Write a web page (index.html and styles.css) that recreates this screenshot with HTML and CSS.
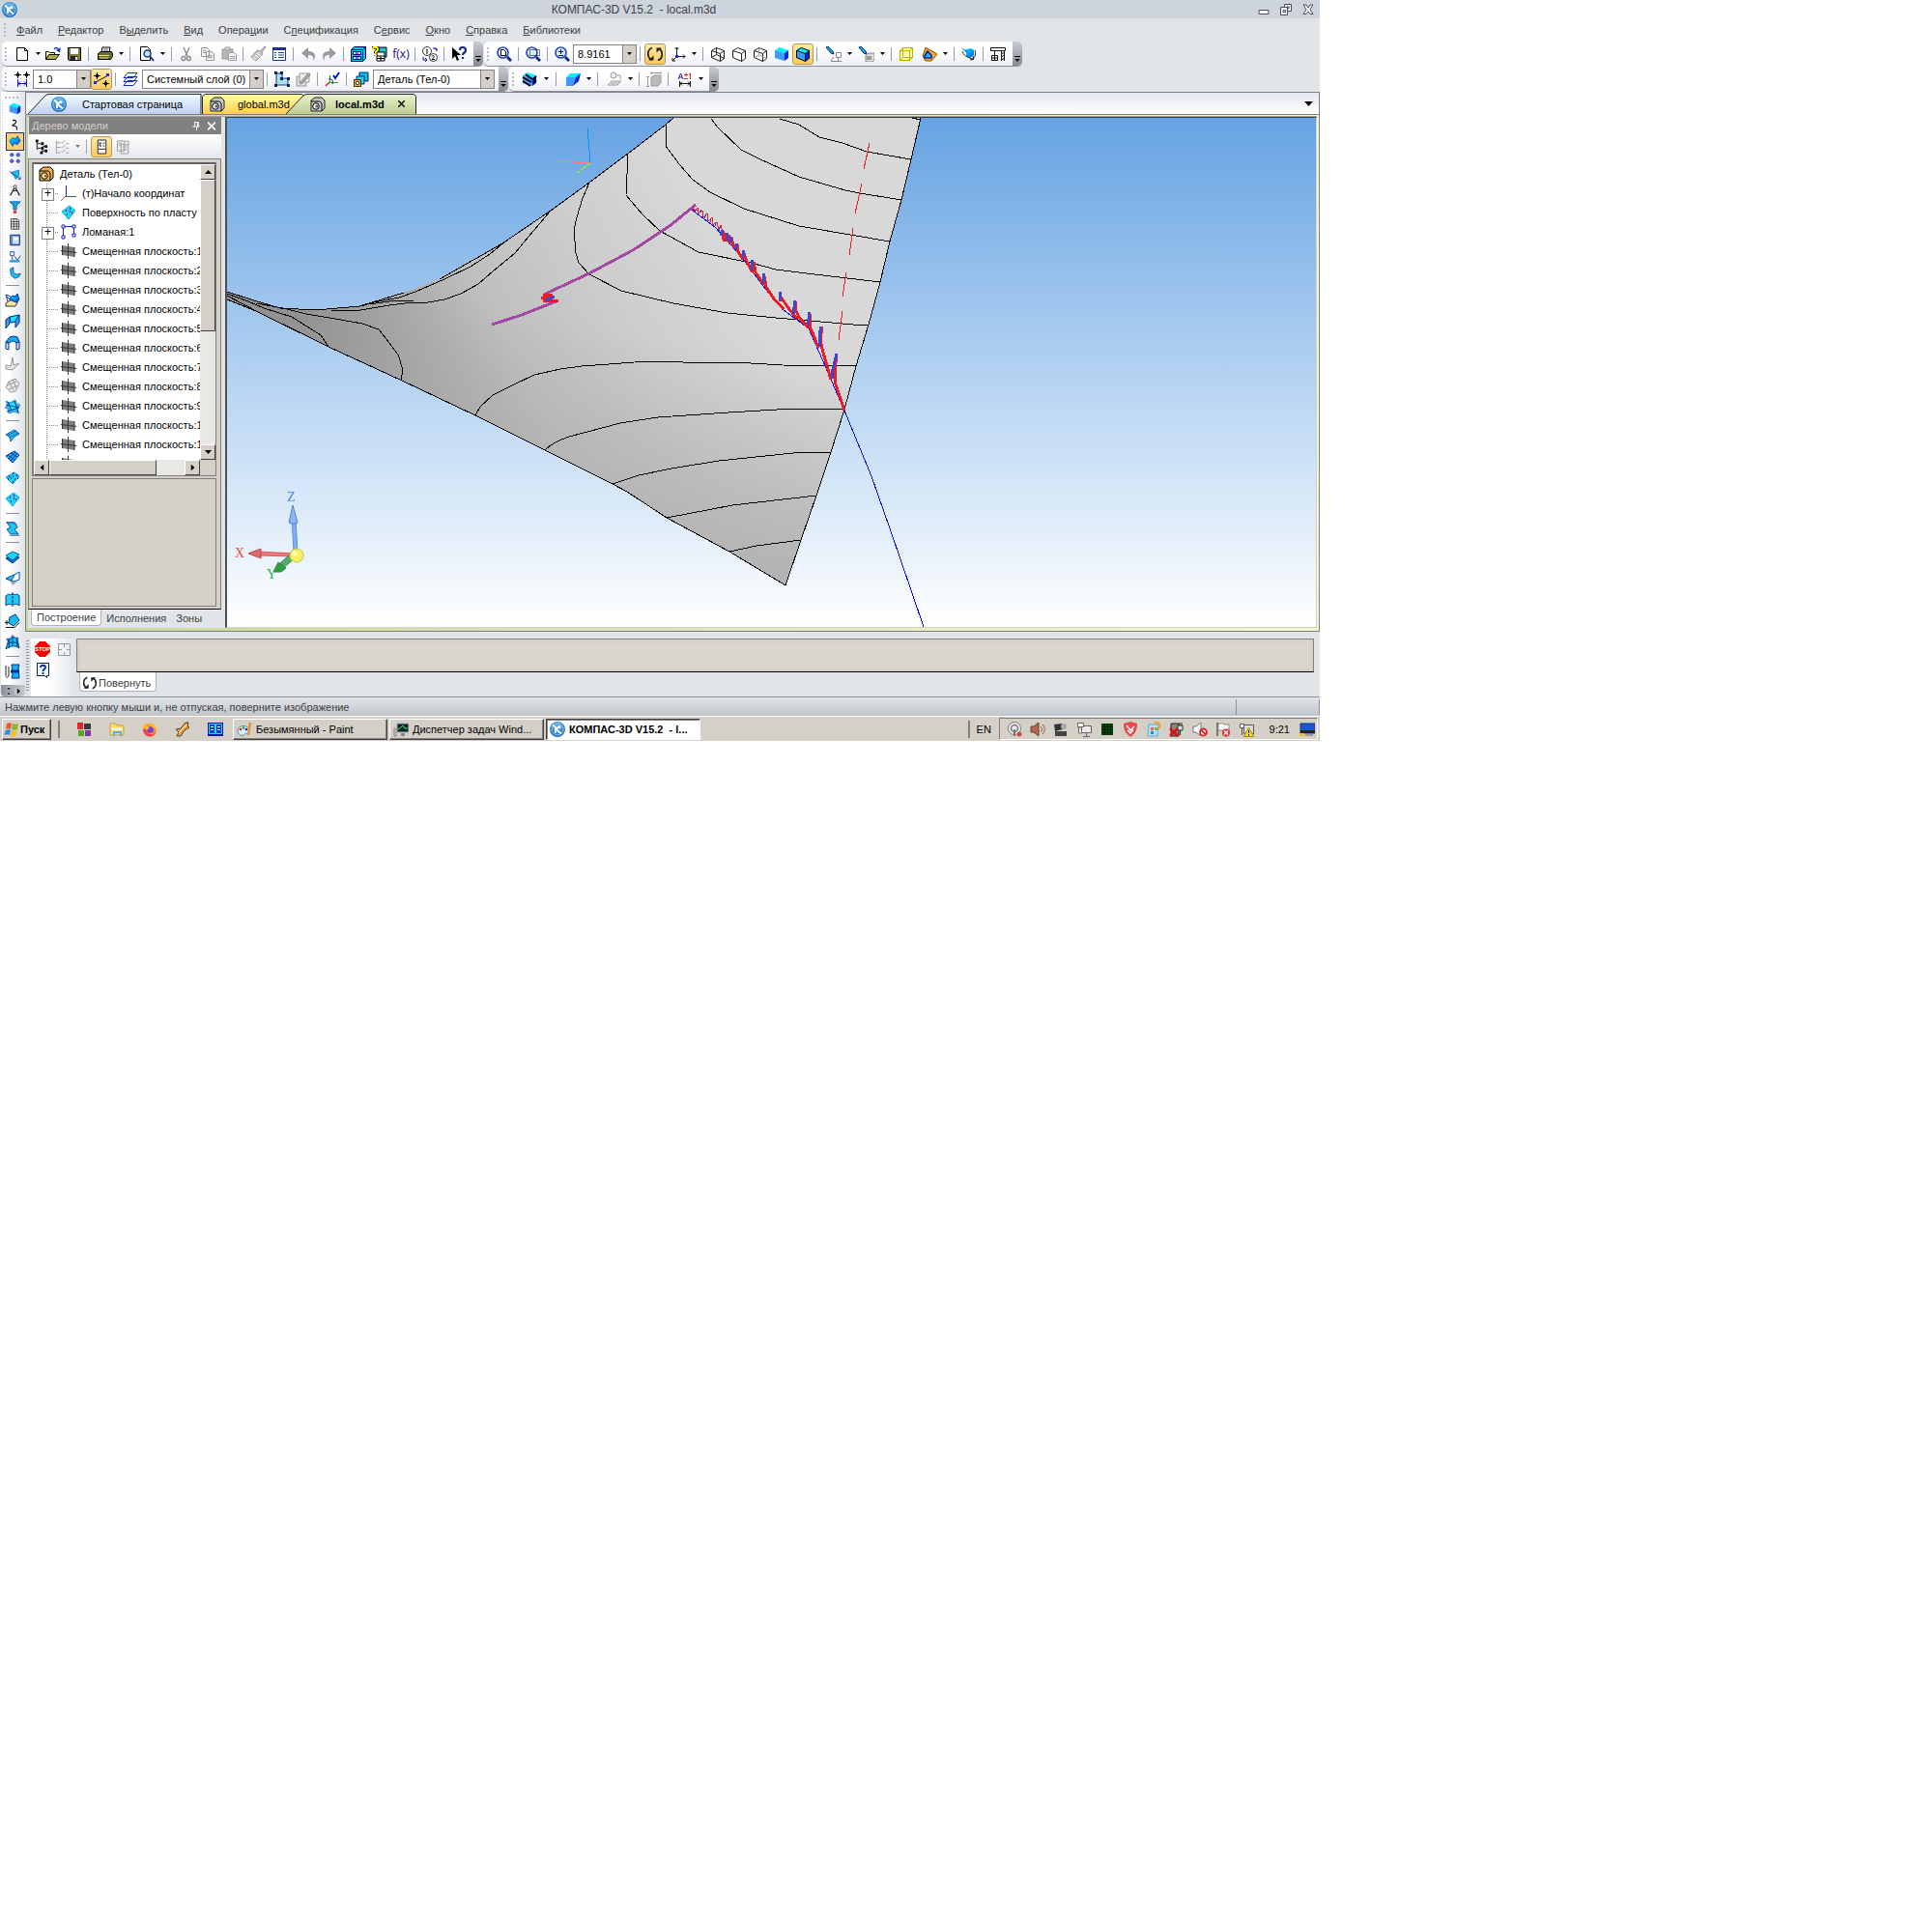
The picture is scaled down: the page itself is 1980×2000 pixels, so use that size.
FILE: index.html
```html
<!DOCTYPE html>
<html lang="ru">
<head>
<meta charset="utf-8">
<title>КОМПАС-3D V15.2 - local.m3d</title>
<meta name="viewport" content="width=device-width, initial-scale=1">
<link rel="stylesheet" href="styles.css">
</head>
<body>
<svg class="sprite" aria-hidden="true">
<defs>
<linearGradient id="g-blue" x1="0" y1="0" x2="1" y2="1"><stop offset="0" stop-color="#00e8ff"/><stop offset="1" stop-color="#0050e8"/></linearGradient>
<radialGradient id="g-logo" cx=".5" cy=".3" r=".8"><stop offset="0" stop-color="#5fb4ee"/><stop offset="1" stop-color="#0f5fb0"/></radialGradient>
<symbol id="logo" viewBox="0 0 16 16"><circle cx="8" cy="8" r="8" fill="url(#g-logo)"/><circle cx="8" cy="8" r="6" fill="none" stroke="#a8d0f0" stroke-width=".8"/><path d="M3 3.500l3 2.500v6M10.500 4.500L6.500 8l5.500 4.500M10.500 4.500v2.500" stroke="#fff" stroke-width="1.800" fill="none"/></symbol>
<symbol id="new" viewBox="0 0 16 16"><path d="M2.500 1.500h8l3 3v10h-11z" fill="#fff" stroke="#000"/><path d="M10.500 1.500v3h3" fill="none" stroke="#000"/></symbol>
<symbol id="open" viewBox="0 0 16 16"><path d="M.5 13.500v-8h3l1 1h5v3" fill="#ffffb0" stroke="#000"/><path d="M.5 13.500l3-5h11l-4 5z" fill="#b0a850" stroke="#000"/><path d="M9 3c2-3 5-1 5 2M11.500 3.500l3 2 .5-4" fill="none" stroke="#0030d0" stroke-width="1.300"/></symbol>
<symbol id="save" viewBox="0 0 16 16"><path d="M1.500 1.500h13v13h-12l-1-1z" fill="#807838" stroke="#000"/><path d="M4 2h8v6H4z" fill="#fff"/><path d="M4 10h7v4H4z" fill="#222"/><path d="M9 11h2v3H9z" fill="#ddd"/></symbol>
<symbol id="print" viewBox="0 0 16 16"><path d="M4 6l1-5h8l-1 5z" fill="#fff" stroke="#000"/><path d="M6 3h5M6 5h5" stroke="#666"/><path d="M.5 7.500l3-2h11l1 2v3l-2 3H.5z" fill="#6a6a42" stroke="#000"/><path d="M1 9.500h11M2 12h9" stroke="#e8e060"/></symbol>
<symbol id="preview" viewBox="0 0 16 16"><path d="M1.500.5h7l3 3v11h-10z" fill="#fff" stroke="#000"/><circle cx="8.500" cy="7.500" r="3.500" fill="#bfe4fa" stroke="#23388c" stroke-width="1.500"/><path d="M11 10l4 5" stroke="#23388c" stroke-width="2"/></symbol>
<symbol id="cut" viewBox="0 0 16 16"><path d="M5 1l4 9M11 1L7 10" stroke="#8c8c8c" stroke-width="1.300"/><circle cx="5" cy="12.500" r="2" fill="none" stroke="#8c8c8c" stroke-width="1.300"/><circle cx="10.500" cy="12.500" r="2" fill="none" stroke="#8c8c8c" stroke-width="1.300"/></symbol>
<symbol id="copy" viewBox="0 0 16 16"><path d="M1.500 1.500h6l2 2v7h-8zM6.500 5.500h6l2 2v7h-8z" fill="#f0f0f0" stroke="#999"/><path d="M8 9.500h5M8 11.500h5M3 4.500h3M3 6.500h3" stroke="#999"/></symbol>
<symbol id="paste" viewBox="0 0 16 16"><path d="M1 3h11v10H1z" fill="#b8b8b8" stroke="#999"/><path d="M4 1h5v3H4z" fill="#ddd" stroke="#999"/><path d="M7.500 6.500h6l2 2v6h-8z" fill="#f4f4f4" stroke="#999"/><path d="M9 10.500h5M9 12.500h5" stroke="#999"/></symbol>
<symbol id="brush" viewBox="0 0 16 16"><path d="M15 0l-5 5-3-1-6 7 5 4 7-7-1-2 4-5z" fill="#c4c4c4" stroke="#999"/><path d="M3 11l3 3M5 9l4 3M7 7l4 3" stroke="#fff"/></symbol>
<symbol id="props" viewBox="0 0 16 16"><path d="M1.500 2.500h13v12h-13z" fill="#fff" stroke="#123a9c"/><path d="M1 1h14v3H1z" fill="#1a2f9c"/><path d="M3 6.500h2M3 9h2M3 11.500h2M7 6.500h6M7 9h6M7 11.500h6" stroke="#223a8c"/></symbol>
<symbol id="undo" viewBox="0 0 16 16"><path d="M1 7l7-6v4c7 0 9 5 5 10 1-5-1-6-5-6v4z" fill="#9b9b9b"/></symbol>
<symbol id="redo" viewBox="0 0 16 16"><path d="M15 7L8 1v4c-7 0-9 5-5 10-1-5 1-6 5-6v4z" fill="#9b9b9b"/></symbol>
<symbol id="lib" viewBox="0 0 16 16"><path d="M.5 3.500l3-3h12v12l-3 3H.5z" fill="#00c8d8" stroke="#000060"/><path d="M.5 3.500h12v12M12.500 3.500l3-3" fill="none" stroke="#0000a0"/><path d="M2.500 5.500h8v3h-8zM2.500 10.500h8v3h-8z" fill="#b0f4fa" stroke="#000080"/><path d="M5 7h3M5 12h3" stroke="#0000c0"/></symbol>
<symbol id="tree" viewBox="0 0 16 16"><path d="M7 1h8v10H7z" fill="#20c8c0" stroke="#003"/><path d="M5 6h8v9H5z" fill="#fff" stroke="#000"/><path d="M5 10h8M9 10v5M5 12.500h8" stroke="#000"/><path d="M1 3c0-3 5-3 5 0 0 2-3 2-2 4M4 9v1" stroke="#000" stroke-width="3.500" fill="none"/><path d="M1 3c0-3 5-3 5 0 0 2-3 2-2 4M4 9v1" stroke="#ff0" stroke-width="2" fill="none"/></symbol>
<symbol id="fx" viewBox="0 0 16 16" overflow="visible"><text x="8" y="12" text-anchor="middle" font-family="Open Sans, sans-serif" font-size="12" fill="#10108c">f(x)</text></symbol>
<symbol id="vars" viewBox="0 0 16 16"><circle cx="5" cy="5" r="4.500" fill="#fff" stroke="#333"/><circle cx="11.500" cy="11.500" r="4" fill="#fff" stroke="#333"/><path d="M4 4l1-1v5M10 10.500c1-2 3 0 2 1l-2 2h3" fill="none" stroke="#000"/><path d="M11 2h4v3M15 4l-2-2M1 11v3h4M3 12l2 2-2 2" fill="none" stroke="#11c"/></symbol>
<symbol id="help" viewBox="0 0 16 16"><path d="M1 1v12l3-3 2 5 2-1-2-5h4z" fill="#000"/><path d="M9 4c0-4 6-4 6 0 0 3-3 2-3 5M12 11v2" fill="none" stroke="#1a2a90" stroke-width="2.200"/></symbol>
<symbol id="lens" viewBox="0 0 16 16"><circle cx="6.500" cy="6.500" r="5.500" fill="#d4effc" stroke="#2a4ab4" stroke-width="1.700"/><path d="M11 11l4 4" stroke="#14287c" stroke-width="3"/></symbol>
<symbol id="zdoc" viewBox="0 0 16 16"><use href="#lens"/><path d="M4.500 3.500h3l2 2v4h-5z" fill="#fff" stroke="#000"/></symbol>
<symbol id="zwin" viewBox="0 0 16 16"><use href="#lens"/><path d="M4.500 3.500h10v6h-10z" fill="none" stroke="#000" stroke-dasharray="1 1"/></symbol>
<symbol id="zpm" viewBox="0 0 16 16"><use href="#lens"/><path d="M6.500 3v5M4 5.500h5M4 9.500h5" stroke="#00106c"/></symbol>
<symbol id="rotate" viewBox="0 0 16 16"><path d="M5 1.500C-.5 3.500-.5 11 4 14M11 14.500C16.500 12.500 16.500 5 12 2" fill="none" stroke="#222" stroke-width="1.700"/><path d="M1 14.500h5.500V9.500zM15 1.500H9.500v5z" fill="#222"/></symbol>
<symbol id="axes" viewBox="0 0 16 16"><path d="M6.500 10V1M4.500 3l2-2 2 2M7 10.500h8M13 8.500l2 2-2 2M6 11l-4 4M2 12v3h3" fill="none" stroke="#111"/><path d="M5 9h3v3H5z" fill="#12f"/></symbol>
<symbol id="wire" viewBox="0 0 16 16"><path d="M1.500 4.500l5-3 8 3v8l-4 3-9-4zM1.500 4.500l9 3v8M10.500 7.500l4-3M6.500 1.500v7l8 4M6.500 8.500l-5 3" fill="none" stroke="#222"/></symbol>
<symbol id="wire2" viewBox="0 0 16 16"><path d="M1.500 4.500l5-3 8 3v8l-4 3-9-4zM1.500 4.500l9 3v8M10.500 7.500l4-3" fill="#fff" stroke="#222"/></symbol>
<symbol id="wire3" viewBox="0 0 16 16"><use href="#wire2"/><path d="M6.500 2v7l7 3M6.500 9l-4 2" fill="none" stroke="#999"/></symbol>
<symbol id="cube" viewBox="0 0 16 16"><path d="M1 4l5-3 9 3-4 3z" fill="#00f0ff"/><path d="M1 4l10 3v8L1 12z" fill="#3a9cf8"/><path d="M11 7l4-3v8l-4 3z" fill="#0828e0"/></symbol>
<symbol id="cubee" viewBox="0 0 16 16"><use href="#cube"/><path d="M1.500 4.500l5-3 8 3v8l-4 3-9-4zM1.500 4.500l9 3v8M10.500 7.500l4-3" fill="none" stroke="#001"/></symbol>
<symbol id="torch" viewBox="0 0 16 16"><path d="M0 1l2-1 5 5 1 3-3-1z" fill="#08b8e8" stroke="#002080"/></symbol>
<symbol id="proj" viewBox="0 0 16 16"><use href="#torch"/><path d="M10.500 6.500h5v5h-5zM12.500 12v4M5 15.500h11M5 15l3-4" fill="none" stroke="#888"/></symbol>
<symbol id="projg" viewBox="0 0 16 16"><use href="#torch"/><path d="M7 9l3-2h6v7l-2 2H7z" fill="#ddd" stroke="#888"/><path d="M8 10h5v4H8z" fill="#999"/></symbol>
<symbol id="ycube" viewBox="0 0 16 16"><path d="M1.500 4.500l3-3h10v10l-3 3h-10zM1.500 4.500h10v10M11.500 4.500l3-3M4.500 1.500v10h10M4.500 11.500l-3 3" fill="#ffff90" stroke="#b8b000"/></symbol>
<symbol id="section" viewBox="0 0 16 16"><path d="M4 1l12 7-6 7H4l-3-5z" fill="#f8a820" stroke="#805000"/><path d="M3 10l3-5 4 4v3H3z" fill="#20b0f0" stroke="#0020c0" stroke-width="1.500"/></symbol>
<symbol id="qcube" viewBox="0 0 16 16"><path d="M5 3l5-1 3 2v5l-4 3-4-2z" fill="url(#g-blue)"/><path d="M14 4c2 5-1 9-5 10M1 5c1 4 5 7 12 8M12 10l1 3-3 1" fill="none" stroke="#222"/><path d="M0 2l6 2 3 6z" fill="#2090f0"/></symbol>
<symbol id="crane" viewBox="0 0 16 16"><path d="M.5 1.500h15v3H.5zM11.500 5v10M14.500 5v10M11 14l4-2M11 11l4-2M11 8l4-2M4.500 5v4M1.500 9.500h6v5h-6zM4.500 9.500v5M1.500 12h6" fill="none" stroke="#111"/></symbol>
<symbol id="step" viewBox="0 0 16 16"><path d="M0 3.500h7M9 3.500h7M3.500 0v7M12.500 0v7" stroke="#111"/><path d="M2 2h3v3H2zM11 2h3v3h-3z" fill="#111"/><path d="M3.500 8v8M12.500 8v8M4 12.500h8M6 10.500l-2 2 2 2M10 10.500l2 2-2 2" fill="none" stroke="#11c"/></symbol>
<symbol id="snap" viewBox="0 0 16 16"><path d="M0 4.500h7M3.500 1v7M9 12.500h7M12.500 9v7" stroke="#111"/><path d="M2 3h3v3H2zM11 11h3v3h-3z" fill="#111"/><path d="M2 11L15 4" stroke="#111"/><path d="M0 10h3v3H0zM13 2h3v3h-3z" fill="#22f"/></symbol>
<symbol id="layers" viewBox="0 0 16 16"><path d="M1 14.500L5 9.500h10l-4 5zM1 10.500L5 5.500h10l-4 5zM1 6.500L5 1.500h10l-4 5z" fill="#f4f8ff" stroke="#1030c8"/></symbol>
<symbol id="sketch" viewBox="0 0 16 16"><path d="M2 2h6v5h6v7H2z" fill="#a8e0e8" stroke="#123a9c"/><path d="M0 0h3v3H0zM6 0h3v3H6zM6 6h3v3H6zM13 6h3v3h-3zM0 13h3v3H0zM13 13h3v3h-3z" fill="#124"/></symbol>
<symbol id="sketchg" viewBox="0 0 16 16"><path d="M1 5h10v10H1z" fill="#ddd" stroke="#999"/><path d="M4 2h10v9H4z" fill="#eee" stroke="#999"/><path d="M4 12l8-9 3-1-1 3-8 8z" fill="#aaa" stroke="#888"/></symbol>
<symbol id="ortho" viewBox="0 0 16 16"><path d="M5.500 4v7M5 11.500h9" stroke="#2a2"/><path d="M5 11l-4 4" stroke="#d22" stroke-width="1.500"/><path d="M9 4l2 3 4-6" fill="none" stroke="#0020b0" stroke-width="2"/><path d="M4 8c4-1 5 2 4 5" fill="none" stroke="#11c"/></symbol>
<symbol id="parts" viewBox="0 0 16 16"><path d="M6 1h9v9H6z" fill="#18b8e0" stroke="#00287c"/><path d="M3 5h8v8H3z" fill="#38d0f0" stroke="#00287c"/><path d="M.5 8.500h7v7h-7z" fill="#f8b848" stroke="#402800"/><circle cx="4" cy="12" r="1.800" fill="#fff" stroke="#402800"/></symbol>
<symbol id="zebra" viewBox="0 0 16 16"><use href="#cube"/><path d="M1 6l9 5M1 10l8 5M4 3l7 5M12 8l3-3M12 12l3-3" stroke="#001" stroke-width="2"/></symbol>
<symbol id="wedge" viewBox="0 0 16 16"><path d="M1 6l4-4h11L11 6z" fill="#00f0ff"/><path d="M1 6h10L8 15H1z" fill="#3a9cf8"/><path d="M11 6l5-4-2 8-6 5z" fill="#0828e0"/></symbol>
<symbol id="sheetg" viewBox="0 0 16 16"><circle cx="7" cy="4" r="3" fill="#eee" stroke="#999"/><path d="M10 4h4v4M1 14l4-4h10l-4 4zM4 12h9" fill="none" stroke="#999"/></symbol>
<symbol id="dimbox" viewBox="0 0 16 16"><path d="M5 6l3-2h7v8l-3 3H5z" fill="#bbb" stroke="#999"/><path d="M5 1.500h10M5 0v3M15 0v3M1.500 5v10M0 5.500h3M0 15.500h3" stroke="#999"/></symbol>
<symbol id="tol" viewBox="0 0 16 16"><path d="M1 8l2.500-6L6 8M2 6h3" fill="none" stroke="#11239c"/><path d="M7 3.500h4M9 1.500v4M7 7.500h4M12 3l1.500-1v6" fill="none" stroke="#d22"/><path d="M2.500 10v6M13.500 10v6M3 12.500h10M5 10.500l-2 2 2 2M11 10.500l2 2-2 2" fill="none" stroke="#111"/></symbol>
<symbol id="part" viewBox="0 0 16 16"><path d="M1 4l4-3h7l3 3v8l-3 3H1z" fill="#f0b050" stroke="#000"/><path d="M1 5h9l2 2v8" fill="none" stroke="#000"/><circle cx="6" cy="10" r="3.300" fill="#ffe0a0" stroke="#000"/><circle cx="7" cy="10" r="1.300" fill="#806020"/></symbol>
<symbol id="partg" viewBox="0 0 16 16"><path d="M1 4l4-3h7l3 3v8l-3 3H1z" fill="#c8c8c0" stroke="#222"/><path d="M1 5h9l2 2v8" fill="none" stroke="#000"/><circle cx="6" cy="10" r="3.300" fill="#eee" stroke="#000"/><circle cx="7" cy="10" r="1.500" fill="#555"/></symbol>
<symbol id="curve" viewBox="0 0 16 16"><path d="M5 2c4-1 6 1 3 4s-5 2-1 3 4 3 3 5" fill="none" stroke="#111" stroke-width="1.400"/></symbol>
<symbol id="surf" viewBox="0 0 16 16"><path d="M1 7l4-4 4 2 2-4 4 6-4 5-4-2-2 4z" fill="url(#g-blue)" stroke="#0050b0"/></symbol>
<symbol id="dots" viewBox="0 0 16 16"><g fill="#5a74f0" stroke="#1830b0"><circle cx="4" cy="4" r="2"/><circle cx="12" cy="4" r="2"/><circle cx="4" cy="12" r="2"/><circle cx="12" cy="12" r="2"/></g></symbol>
<symbol id="surfa" viewBox="0 0 16 16"><path d="M3 6l5-2 5-1v7l-4 4-2-4z" fill="#20c8e8" stroke="#06c"/><path d="M1 4l14 10M12 14h3v-3" stroke="#1030c0" fill="none"/></symbol>
<symbol id="compass" viewBox="0 0 16 16"><path d="M8 3L2 14M8 3l6 11M5 8h6" fill="none" stroke="#222" stroke-width="1.500"/><circle cx="8" cy="3" r="2" fill="#eee" stroke="#222"/></symbol>
<symbol id="funnel" viewBox="0 0 16 16"><path d="M1 1h14l-5 5v5H6V6z" fill="#18a0e8" stroke="#035a9c"/><path d="M6 12h4v4H6z" fill="#e04020"/></symbol>
<symbol id="table" viewBox="0 0 16 16"><path d="M3 2h8l2 2v11H3z" fill="#fff" stroke="#222"/><path d="M3 5.500h10M3 8.500h10M3 11.500h10M6.500 2v13M10 2v13" stroke="#333"/></symbol>
<symbol id="book" viewBox="0 0 16 16"><path d="M2 1.500h12v13H2z" fill="#3868d0" stroke="#102060"/><path d="M5 3h8v10H5z" fill="#c8e4fa"/><path d="M6 5h6v3H6z" fill="#fff"/><path d="M3.500 2v12" stroke="#fff" stroke-dasharray="1 1"/></symbol>
<symbol id="check" viewBox="0 0 16 16"><path d="M2 2h5v5H2zM4.500 7v6" fill="#eef" stroke="#123a9c"/><path d="M8 8l3 5 4-6" fill="none" stroke="#222"/><path d="M1 14h13" stroke="#28a0e8" stroke-width="3"/></symbol>
<symbol id="elbow" viewBox="0 0 16 16"><path d="M2 3l4-2v7l4 2 5-1-2 4-5 2-5-4z" fill="#18c8e8" stroke="#0040a0"/></symbol>
<symbol id="p1" viewBox="0 0 16 16"><path d="M1 11l4-3h9l-3 6H1z" fill="#f0e8a0" stroke="#333"/><path d="M5 6l3-3 3 1 2-3 2 6-3 3-3-1z" fill="url(#g-blue)" stroke="#03a"/><path d="M1 3l5 5M3 9L1 2l5 2" stroke="#03a" fill="none"/></symbol>
<symbol id="p2" viewBox="0 0 16 16"><path d="M5 3l10-2-3 7-6 1z" fill="#18e0f8" stroke="#002c90"/><path d="M5 3v7l-4 5V6zM15 1v8l-4 5V7z" fill="#3a9cf0" stroke="#002c90"/></symbol>
<symbol id="p3" viewBox="0 0 16 16"><path d="M1 7l4-5q4-2 8 0l2 5-3 1q-4-4-7 0z" fill="#18a8f0" stroke="#002c90"/><path d="M1 7v7l3 1V9zM12 8v7l3-1V7z" fill="#c8ecfc" stroke="#002c90"/></symbol>
<symbol id="p4" viewBox="0 0 16 16"><path d="M1 9l5 1 2-9 1 8 6-2-7 7-7-1z" fill="#e4e4e4" stroke="#999"/></symbol>
<symbol id="p5" viewBox="0 0 16 16"><path d="M1 10l3-6 7-3 4 5-4 8-5 1z" fill="#e8e8e8" stroke="#999"/><path d="M4 4l5 9M8 2l4 9M2 8l10-4M4 12l9-4" stroke="#999" fill="none"/></symbol>
<symbol id="p6" viewBox="0 0 16 16"><path d="M1 2l4 2 6-3 1 4 4 1-3 5 2 4-5-2-6 2-1-5-3-1 3-3z" fill="#2cb0f4" stroke="#2898e0"/><path d="M5 5l6-1 2 5-6 3z" fill="#18f0ff"/><path d="M3 3l4 9M10 2l4 12M1 6l14 3M2 13l12-4" stroke="#003c90" fill="none"/></symbol>
<symbol id="p7" viewBox="0 0 16 16"><path d="M1 7l9-5 5 4-5 3-4 5c0-4-2-6-5-7z" fill="#20c8f0" stroke="#0858b0"/><path d="M3 8l9-5M5 10l9-5" stroke="#0858b0"/></symbol>
<symbol id="p8" viewBox="0 0 16 16"><path d="M1 7l9-5 5 4-7 8z" fill="#20b8f0" stroke="#0030a0"/><path d="M3 6l7 5M6 4l7 4M4 10l7-7M6 12l7-8" stroke="#0030a0"/></symbol>
<symbol id="p9" viewBox="0 0 16 16"><path d="M1 7l9-5 5 4-7 8z" fill="#18d0f0" stroke="#18a0e0"/><path d="M4 6h1M8 3h1M12 5h1M6 8h1M10 9h1M3 9h1M8 12h1M13 8h1M8 6h1" stroke="#1020a0" stroke-width="2"/></symbol>
<symbol id="p10" viewBox="0 0 16 16"><path d="M1 7l8-6 6 5-7 9z" fill="#18d8f0" stroke="#18a0e0"/><path d="M5 6h1M9 4h1M11 8h1M6 10h1M9 7h1" stroke="#1020a0" stroke-width="2"/></symbol>
<symbol id="p11" viewBox="0 0 16 16"><path d="M1 1.500h9l3 3M5 15.500h10l-3-4" fill="none" stroke="#888"/><path d="M2 2h8l3 5-3 2 4 5H6L2 9l4-2z" fill="#18c8f0" stroke="#1050b0"/></symbol>
<symbol id="p12" viewBox="0 0 16 16"><path d="M1 9l7-4 7 3-7 6z" fill="#0870d0" stroke="#003080"/><path d="M1 6l7-4 7 3-7 6z" fill="#18d8f8" stroke="#0858b0"/></symbol>
<symbol id="p13" viewBox="0 0 16 16"><path d="M5 10l8 1-5 4z" fill="#aaa"/><path d="M1 8l9-4 5-3v8l-6 2z" fill="#fff" stroke="#0858b0"/><path d="M1 8l9-4-3 6z" fill="#18d0f0" stroke="#0858b0"/></symbol>
<symbol id="p14" viewBox="0 0 16 16"><path d="M1 14V4c4-4 4 0 7-2 3 2 4-2 7 2v10c-3-3-5 0-7-2-2 2-4-1-7 2z" fill="#28c8f0" stroke="#0040a0"/><path d="M8 0v15" stroke="#002060" stroke-dasharray="3 1"/></symbol>
<symbol id="p15" viewBox="0 0 16 16"><path d="M5 4l6-3 4 6-6 6-5-3z" fill="#18b8f0" stroke="#0040a0"/><path d="M0 9.500h4M2 7v5M1 14.500h9l5-5" stroke="#111" fill="none"/></symbol>
<symbol id="p16" viewBox="0 0 16 16"><path d="M1 15l3-10c3-3 7-3 9 0l2 9c-4-3-9-3-14 1z" fill="#18c8e8" stroke="#003c90"/><path d="M3 10c4-3 7-3 11 0M8 3v9M5 4l-1 10M12 5l1 8" stroke="#003c90" fill="none"/><g fill="#fff" stroke="#1030c0"><circle cx="3" cy="5" r="1"/><circle cx="8" cy="2" r="1"/><circle cx="13" cy="4" r="1"/></g></symbol>
<symbol id="p17" viewBox="0 0 16 16"><path d="M7 1h8l-1 3 1 11H7l1-4z" fill="#18b0f0" stroke="#002c90"/><path d="M6 8h9" stroke="#002c90" stroke-width="3"/><path d="M1 2v9c0 5 3 4 3 1V3" fill="none" stroke="#222"/></symbol>
<symbol id="ttree" viewBox="0 0 16 16"><path d="M3.500 1v10M4 4.500h4M4 9.500h4M9.500 9v5M10 7.500h2M10 12.500h2" stroke="#111" fill="none"/><path d="M2 0h3v3H2zM8 3h3v3H8zM8 8h3v3H8zM7 13h3v3H7zM12 6h3v3h-3zM12 11h3v3h-3z" fill="#111"/></symbol>
<symbol id="tlist" viewBox="0 0 16 16"><path d="M1.500 1v14M2 3.500h4M2 8.500h4M2 14.500h4M7 3l1 1 3-3M7 8l1 1 3-3M7 13l1 1 3-3M12 4.500h3M12 9.500h3M12 14.500h3" fill="none" stroke="#999"/></symbol>
<symbol id="tdoc" viewBox="0 0 16 16"><path d="M3.500.5h9v15h-9zM4 10.500h8M5.500 3v4h2M5.500 4h2M9 4h2M9 7h2" fill="#fffbe8" stroke="#15205c"/></symbol>
<symbol id="tdocs" viewBox="0 0 16 16"><path d="M1.500 1.500h8v11h-8zM5.500 5.500h8v10h-8z" fill="#eee" stroke="#999"/><path d="M3 4h4M3 6h2M7 8h5M7 11h5M10 2h4v4" stroke="#999" fill="none"/></symbol>
<symbol id="origin" viewBox="0 0 16 16"><path d="M5.500 0v11" stroke="#22c"/><path d="M5 11.500h11" stroke="#2a6a4a"/><path d="M5 11l-5 5" stroke="#d44"/></symbol>
<symbol id="poly" viewBox="0 0 16 16"><path d="M2.500 13V2.500h11V11" fill="none" stroke="#1a1ad0"/><path d="M1 1h3v3H1zM12 1h3v3h-3zM1 12h3v3H1zM12 10h3v3h-3z" fill="#fff" stroke="#1a1ad0"/></symbol>
<symbol id="plane" viewBox="0 0 16 16"><path d="M1 2l6 1 7 1v10l-6-1-7-1z" fill="#808080"/><path d="M7.500 0v16M0 7.500l16 2M1.500 2v10M14 4v10" stroke="#333" fill="none"/></symbol>
<symbol id="stop" viewBox="0 0 16 16"><path d="M5 0h6l5 5v6l-5 5H5l-5-5V5z" fill="#f00"/><text x="8" y="10" text-anchor="middle" font-family="Liberation Sans" font-weight="bold" font-size="6" fill="#fff">STOP</text></symbol>
<symbol id="target" viewBox="0 0 16 16"><path d="M2.500 2.500h12v12h-12zM8.500 2v4M8.500 11v4M2 8.500h4M11 8.500h4" fill="none" stroke="#999"/></symbol>
<symbol id="note" viewBox="0 0 16 16"><path d="M2.500.5h12v13h-2v2l-2-2h-8z" fill="#e0f6fc" stroke="#123"/><path d="M6 5c0-3 5-3 5 0 0 2-2.500 1.500-2.500 4M8.500 10v2" fill="none" stroke="#15288c" stroke-width="1.800"/></symbol>
<symbol id="flag" viewBox="0 0 16 16"><path d="M3 2c2-1 4-1 5 0L7 8c-2-1-4-1-5 0z" fill="#f0582a"/><path d="M9 2c2 1 4 1 6 0l-1 6c-2 1-4 1-6 0z" fill="#80bc30"/><path d="M2 9c2-1 4-1 5 0l-1 5c-2-1-4-1-6 0z" fill="#2a90e0"/><path d="M8 9c2 1 4 1 6 0l-2 6c-2 1-4 1-5 0z" fill="#f8c020"/></symbol>
<symbol id="cubes" viewBox="0 0 16 16"><path d="M1 1h6v7H1z" fill="#e02828"/><path d="M8 2h7v6H8z" fill="#383838"/><path d="M2 9h6v6H2z" fill="#58a828"/><path d="M9 9h6v6H9z" fill="#8038a8"/></symbol>
<symbol id="folder" viewBox="0 0 16 16"><path d="M1 2h6l1 2h7v10H1z" fill="#f8d878" stroke="#c8a040"/><path d="M2 6h12v3H2z" fill="#fff2b8"/><path d="M4 15v-5h9v5h-2v-3H6v3z" fill="#58b0e8"/></symbol>
<symbol id="fox" viewBox="0 0 16 16"><circle cx="8" cy="9" r="7" fill="#ff9420"/><path d="M1 8c2 10 12 9 14 1-1 3-4 5-7 4s-4-3-3-6z" fill="#f83858"/><circle cx="8.500" cy="8.500" r="3.500" fill="#7840d8"/><path d="M8 1c4 1 7 4 7 8-2-3-5-3-7-5zM1 5l2-3 2 3 3 1-3 3z" fill="#ffbc28"/></symbol>
<symbol id="bolt" viewBox="0 0 16 16"><path d="M1 8l5-1 5-6h3l-1 3 2 2-5 3-4 6H2l2-4z" fill="#f0a028" stroke="#444"/><path d="M4 12l8-9" stroke="#fff"/></symbol>
<symbol id="commander" viewBox="0 0 16 16"><path d="M0 1h16v14H0z" fill="#0818a0"/><path d="M1.500 2.500h6v10h-6zM8.500 2.500h6v10h-6z" fill="#1038d8" stroke="#18e0f0"/><path d="M3 5.500h3M3 8.500h3M10 5.500h3M10 8.500h3" stroke="#fff"/></symbol>
<symbol id="paint" viewBox="0 0 16 16"><path d="M1 9c0-6 12-6 12 0 0 7-3 1-5 4-2 3-7 1-7-4z" fill="#d8eef8" stroke="#5090b0"/><circle cx="4" cy="8" r="1.300" fill="#d22"/><circle cx="7" cy="6.500" r="1.300" fill="#3a3"/><circle cx="10" cy="8" r="1.300" fill="#22c"/><path d="M14 1l-2 13" stroke="#e89030" stroke-width="2.500"/></symbol>
<symbol id="monitor" viewBox="0 0 16 16"><path d="M1 7h2v8H1z" fill="#ccc" stroke="#888"/><path d="M4 2h12v9H4z" fill="#123" stroke="#aaa"/><path d="M5 8l3-2 2-2 2 3h3" fill="none" stroke="#2f4"/><path d="M8 12h4v3H8z" fill="#888"/></symbol>
<symbol id="t1" viewBox="0 0 16 16"><circle cx="8" cy="7" r="6.500" fill="#eee" stroke="#777"/><circle cx="8" cy="7" r="3.500" fill="none" stroke="#777" stroke-width="1.500"/><path d="M7 8h2v7H7z" fill="#777"/><circle cx="13" cy="13" r="2.500" fill="#d44"/></symbol>
<symbol id="t2" viewBox="0 0 16 16"><path d="M1 5h3l5-4v14l-5-4H1z" fill="#b86848" stroke="#643"/><path d="M11 5c2 2 2 4 0 6M13 3c3 3 3 7 0 10" fill="none" stroke="#955"/></symbol>
<symbol id="t3" viewBox="0 0 16 16"><path d="M1 3l8-1 1 6-8 2z" fill="#333"/><path d="M2 10h12v5H2z" fill="#444"/><circle cx="11" cy="5" r="3" fill="#aaa"/></symbol>
<symbol id="t4" viewBox="0 0 16 16"><path d="M5.500 4.500h10v7h-10zM10.500 12v3M7 15.500h7" fill="#e8e8e8" stroke="#666"/><path d="M1.500 1.500h6v4h-6zM2.500 6v6h3" fill="#fff" stroke="#666"/></symbol>
<symbol id="t5" viewBox="0 0 16 16"><path d="M2 2h12v12H2z" fill="#064a06"/><path d="M5.500 2v12M8.500 2v12M11.500 2v12M2 5.500h12M2 8.500h12M2 11.500h12" stroke="#020"/></symbol>
<symbol id="t6" viewBox="0 0 16 16"><path d="M1 2l7-2 7 2c0 7-2 10-7 14C3 12 1 9 1 2z" fill="#e84848"/><path d="M4 4l4 5 4-4M5 9l3 3 3-4" stroke="#fff" stroke-width="1.500" fill="none"/></symbol>
<symbol id="t7" viewBox="0 0 16 16"><path d="M3 3h10l-1 12H2z" fill="#b8e0f8" stroke="#68a8d8"/><path d="M5 6h3v3H5z" fill="#e64"/><path d="M9 6h3v3H9z" fill="#7b3"/><path d="M5 10h3v3H5z" fill="#28d"/><path d="M9 1c7-1 7 6 3 6" fill="none" stroke="#f0a030" stroke-width="2"/></symbol>
<symbol id="t8" viewBox="0 0 16 16"><path d="M2 2h8v13H2z" fill="#888" stroke="#222"/><path d="M9 4h5v5H9zM11 1v3M13 1v3M11.500 9v5" stroke="#333" fill="#ddd"/><path d="M1 7l8 8M9 7l-8 8" stroke="#e01010" stroke-width="2.500"/></symbol>
<symbol id="t9" viewBox="0 0 16 16"><path d="M1 5h3l5-4v14l-5-4H1z" fill="#fff" stroke="#777"/><circle cx="11.500" cy="11" r="3.500" fill="#fff" stroke="#e02020" stroke-width="1.800"/><path d="M9 9l5 4" stroke="#e02020" stroke-width="1.800"/></symbol>
<symbol id="t10" viewBox="0 0 16 16"><path d="M2 1v14" stroke="#777" stroke-width="2"/><path d="M3 2h5l1 1h5v7H9L8 9H3z" fill="#fff" stroke="#888"/><circle cx="11" cy="11.500" r="4" fill="#e03030"/><path d="M9 9.500l4 4M13 9.500l-4 4" stroke="#fff" stroke-width="1.500"/></symbol>
<symbol id="t11" viewBox="0 0 16 16"><path d="M5.500 3.500h10v9h-10z" fill="#ddd" stroke="#555"/><path d="M1.500 2.500h4v4h-4zM3.500 7v7" stroke="#555" fill="#fff"/><path d="M10.500 6l5 9.500h-10z" fill="#f8d820" stroke="#a80"/><path d="M10.500 9v3M10.500 13v1.500" stroke="#000"/></symbol>
<symbol id="t12" viewBox="0 0 16 16"><path d="M1 2h15v10H1z" fill="#1858c8" stroke="#103880"/><path d="M1 9h15v3H1z" fill="#222"/><path d="M0 12h5v3H0z" fill="#f0c030"/><path d="M6 13h8v2H6z" fill="#999"/></symbol>
<symbol id="down" viewBox="0 0 7 4"><path d="M0 0h7L3.500 4z" fill="#000"/></symbol>
</defs>
</svg>

<div class="screen">
  <header class="titlebar">
    <svg class="ico"><use href="#logo"/></svg>
    <h1 class="title">КОМПАС-3D V15.2 &nbsp;- local.m3d</h1>
    <div class="winbtns">
      <button class="winbtn" aria-label="Свернуть"><svg viewBox="0 0 12 12"><path d="M1 6.500h10v4H1z" fill="#f4f6f8" stroke="#4c4c60"/></svg></button>
      <button class="winbtn" aria-label="Восстановить"><svg viewBox="0 0 12 12"><path d="M4.500.5h7v7h-7zM7 3h2v2H7z" fill="#f4f6f8" stroke="#4c4c60"/><path d="M.5 3.500h7v8h-7zM3 6.500h2.500v2H3z" fill="#f4f6f8" stroke="#4c4c60"/></svg></button>
      <button class="winbtn" aria-label="Закрыть"><svg viewBox="0 0 12 12"><path d="M1 1h3l2 3 2-3h3L8 6l3 4.500H8L6 8l-2 2.500H1L4 6z" fill="#f4f6f8" stroke="#4c4c60"/></svg></button>
    </div>
  </header>

  <nav class="menubar" aria-label="Главное меню">
    <span class="grip"></span>
    <button><u>Ф</u>айл</button><button><u>Р</u>едактор</button><button>В<u>ы</u>делить</button><button><u>В</u>ид</button><button>Опера<u>ц</u>ии</button><button>С<u>п</u>ецификация</button><button>С<u>е</u>рвис</button><button><u>О</u>кно</button><button><u>С</u>правка</button><button><u>Б</u>иблиотеки</button>
  </nav>

  <div class="toolrow">
    <div class="toolbar">
      <span class="grip"></span>
      <button class="tool" aria-label="Создать"><svg><use href="#new"/></svg></button><button class="drop" aria-label="Ещё"><svg><use href="#down"/></svg></button>
      <button class="tool" aria-label="Открыть"><svg><use href="#open"/></svg></button>
      <button class="tool" aria-label="Сохранить"><svg><use href="#save"/></svg></button><span class="sep"></span>
      <button class="tool split" aria-label="Печать"><svg><use href="#print"/></svg></button><button class="drop" aria-label="Ещё"><svg><use href="#down"/></svg></button><span class="sep"></span>
      <button class="tool split" aria-label="Просмотр"><svg><use href="#preview"/></svg></button><button class="drop" aria-label="Ещё"><svg><use href="#down"/></svg></button><span class="sep"></span>
      <button class="tool" aria-label="Вырезать"><svg><use href="#cut"/></svg></button>
      <button class="tool" aria-label="Копировать"><svg><use href="#copy"/></svg></button>
      <button class="tool" aria-label="Вставить"><svg><use href="#paste"/></svg></button><span class="sep"></span>
      <button class="tool" aria-label="Копировать свойства"><svg><use href="#brush"/></svg></button>
      <button class="tool" aria-label="Свойства"><svg><use href="#props"/></svg></button><span class="sep"></span>
      <button class="tool" aria-label="Отменить"><svg><use href="#undo"/></svg></button>
      <button class="tool" aria-label="Повторить"><svg><use href="#redo"/></svg></button><span class="sep"></span>
      <button class="tool" aria-label="Менеджер библиотек"><svg><use href="#lib"/></svg></button>
      <button class="tool" aria-label="Менеджер документа"><svg><use href="#tree"/></svg></button>
      <button class="tool" aria-label="Переменные"><svg><use href="#fx"/></svg></button><span class="sep"></span>
      <button class="tool" aria-label="Перестроить"><svg><use href="#vars"/></svg></button><span class="sep"></span>
      <button class="tool" aria-label="Справка"><svg><use href="#help"/></svg></button>
      <button class="cap" aria-label="Параметры панели"><svg><use href="#down"/></svg></button>
    </div>
    <div class="toolbar">
      <span class="grip"></span>
      <button class="tool" aria-label="Показать всё"><svg><use href="#zdoc"/></svg></button><span class="sep"></span>
      <button class="tool" aria-label="Увеличить рамкой"><svg><use href="#zwin"/></svg></button><span class="sep"></span>
      <button class="tool" aria-label="Масштаб"><svg><use href="#zpm"/></svg></button>
      <span class="combo combo-zoom"><select aria-label="Текущий масштаб"><option>8.9161</option></select><i><svg><use href="#down"/></svg></i></span><span class="sep"></span>
      <button class="tool active" aria-label="Повернуть"><svg><use href="#rotate"/></svg></button>
      <button class="tool split" aria-label="Ориентация"><svg><use href="#axes"/></svg></button><button class="drop" aria-label="Ещё"><svg><use href="#down"/></svg></button><span class="sep"></span>
      <button class="tool" aria-label="Каркас"><svg><use href="#wire"/></svg></button>
      <button class="tool" aria-label="Без невидимых линий"><svg><use href="#wire2"/></svg></button>
      <button class="tool" aria-label="Тонкие невидимые"><svg><use href="#wire3"/></svg></button>
      <button class="tool" aria-label="Полутоновое"><svg><use href="#cube"/></svg></button>
      <button class="tool active" aria-label="Полутоновое с каркасом"><svg><use href="#cubee"/></svg></button><span class="sep"></span>
      <button class="tool split" aria-label="Скрыть"><svg><use href="#proj"/></svg></button><button class="drop" aria-label="Ещё"><svg><use href="#down"/></svg></button>
      <button class="tool split" aria-label="Показать"><svg><use href="#projg"/></svg></button><button class="drop" aria-label="Ещё"><svg><use href="#down"/></svg></button><span class="sep"></span>
      <button class="tool" aria-label="Габарит"><svg><use href="#ycube"/></svg></button>
      <button class="tool split" aria-label="Сечение"><svg><use href="#section"/></svg></button><button class="drop" aria-label="Ещё"><svg><use href="#down"/></svg></button><span class="sep"></span>
      <button class="tool" aria-label="Перспектива"><svg><use href="#qcube"/></svg></button><span class="sep"></span>
      <button class="tool" aria-label="Упрощения"><svg><use href="#crane"/></svg></button>
      <button class="cap" aria-label="Параметры панели"><svg><use href="#down"/></svg></button>
    </div>
  </div>

  <div class="toolrow">
    <div class="toolbar">
      <span class="grip"></span>
      <button class="tool" aria-label="Шаг"><svg><use href="#step"/></svg></button>
      <span class="combo combo-step"><select aria-label="Шаг курсора"><option>1.0</option></select><i><svg><use href="#down"/></svg></i></span>
      <button class="tool active" aria-label="Привязки"><svg><use href="#snap"/></svg></button><span class="sep"></span>
      <button class="tool" aria-label="Слои"><svg><use href="#layers"/></svg></button>
      <span class="combo combo-layer"><select aria-label="Текущий слой"><option>Системный слой (0)</option></select><i><svg><use href="#down"/></svg></i></span><span class="sep"></span>
      <button class="tool" aria-label="Эскиз"><svg><use href="#sketch"/></svg></button>
      <button class="tool" aria-label="Редактировать эскиз"><svg><use href="#sketchg"/></svg></button><span class="sep"></span>
      <button class="tool" aria-label="Система координат"><svg><use href="#ortho"/></svg></button><span class="sep"></span>
      <button class="tool" aria-label="Исполнения"><svg><use href="#parts"/></svg></button>
      <span class="combo combo-layer"><select aria-label="Текущая деталь"><option>Деталь (Тел-0)</option></select><i><svg><use href="#down"/></svg></i></span>
      <button class="cap" aria-label="Параметры панели"><svg><use href="#down"/></svg></button>
    </div>
    <div class="toolbar">
      <span class="grip"></span>
      <button class="tool" aria-label="Зебра"><svg><use href="#zebra"/></svg></button><button class="drop drop-wide" aria-label="Ещё"><svg><use href="#down"/></svg></button><span class="sep"></span>
      <button class="tool split" aria-label="Уклон"><svg><use href="#wedge"/></svg></button><button class="drop" aria-label="Ещё"><svg><use href="#down"/></svg></button><span class="sep"></span>
      <button class="tool split" aria-label="Развёртка"><svg><use href="#sheetg"/></svg></button><button class="drop" aria-label="Ещё"><svg><use href="#down"/></svg></button><span class="sep"></span>
      <button class="tool" aria-label="Габариты"><svg><use href="#dimbox"/></svg></button><span class="sep"></span>
      <button class="tool split" aria-label="Допуски"><svg><use href="#tol"/></svg></button><button class="drop" aria-label="Ещё"><svg><use href="#down"/></svg></button>
      <button class="cap" aria-label="Параметры панели"><svg><use href="#down"/></svg></button>
    </div>
  </div>

  <div class="workspace">
    <aside class="palette">
      <span class="grip-h"></span>
      <div class="pal-modes">
        <button><svg><use href="#cube"/></svg></button><button><svg><use href="#curve"/></svg></button><button class="on"><svg><use href="#surf"/></svg></button><button><svg><use href="#dots"/></svg></button><button><svg><use href="#surfa"/></svg></button><button><svg><use href="#compass"/></svg></button><button><svg><use href="#funnel"/></svg></button><button><svg><use href="#table"/></svg></button><button><svg><use href="#book"/></svg></button><button><svg><use href="#check"/></svg></button><button><svg><use href="#elbow"/></svg></button>
      </div>
      <div class="pal-tools">
        <hr><button><svg><use href="#p1"/></svg></button><button><svg><use href="#p2"/></svg></button><button><svg><use href="#p3"/></svg></button><button><svg><use href="#p4"/></svg></button><button><svg><use href="#p5"/></svg></button><button><svg><use href="#p6"/></svg></button>
        <hr><button><svg><use href="#p7"/></svg></button><button><svg><use href="#p8"/></svg></button><button><svg><use href="#p9"/></svg></button><button><svg><use href="#p10"/></svg></button>
        <hr><button><svg><use href="#p11"/></svg></button>
        <hr><button><svg><use href="#p12"/></svg></button><button><svg><use href="#p13"/></svg></button><button><svg><use href="#p14"/></svg></button><button><svg><use href="#p15"/></svg></button><button><svg><use href="#p16"/></svg></button>
        <hr><button><svg><use href="#p17"/></svg></button>
      </div>
      <div class="pal-cap"><svg viewBox="0 0 18 10"><path d="M1 1h5L3.500 4zM1 9h5L3.500 6zM11 1v8M13 1l4 4-4 4z" fill="#000" stroke="#fff" stroke-width=".5"/></svg></div>
    </aside>

    <div class="main">
      <div class="docframe">
        <div class="tabs" role="tablist">
          <button class="tab tab-start" role="tab"><svg class="tabshape" viewBox="0 0 180 22" preserveAspectRatio="none"><defs><linearGradient id="gt1" x2="0" y2="1"><stop offset="0" stop-color="#eefeff"/><stop offset="1" stop-color="#c2d0f2"/></linearGradient></defs><path d="M0 22L18 2q2-1.500 4-1.500h157V22" fill="url(#gt1)" stroke="#222"/></svg><svg class="ico"><use href="#logo"/></svg><span>Стартовая страница</span></button>
          <button class="tab tab-global" role="tab"><svg class="tabshape" viewBox="0 0 106 22" preserveAspectRatio="none"><defs><linearGradient id="gt2" x2="0" y2="1"><stop offset="0" stop-color="#ffff9c"/><stop offset="1" stop-color="#ffcc58"/></linearGradient></defs><path d="M.5 22V3l3-2.500h100l2 2V22" fill="url(#gt2)" stroke="#222"/></svg><svg class="ico"><use href="#partg"/></svg><span>global.m3d</span></button>
          <button class="tab tab-local" role="tab" aria-selected="true"><svg class="tabshape" viewBox="0 0 135 22" preserveAspectRatio="none"><defs><linearGradient id="gt3" x2="0" y2="1"><stop offset="0" stop-color="#eaf2cc"/><stop offset="1" stop-color="#bccd94"/></linearGradient></defs><path d="M0 22L18 2q2-1.500 4-1.500h110l2.500 2V22" fill="url(#gt3)" stroke="#222"/></svg><svg class="ico"><use href="#partg"/></svg><span>local.m3d</span><svg class="close" viewBox="0 0 8 8"><path d="M0 0l8 8M8 0L0 8" stroke="#111" stroke-width="1.700"/></svg></button>
          <button class="tablist" aria-label="Список документов"><svg><use href="#down"/></svg></button>
        </div>
        <div class="docbody">
          <section class="treepane">
            <header class="panehead"><h2>Дерево модели</h2><svg viewBox="0 0 8 10"><path d="M2 0h5v5h1v1H5v4H4V6H0V5h2zM3 1v4h2V1z" fill="#fff"/></svg><svg viewBox="0 0 8 8"><path d="M0 0l8 8M8 0L0 8" stroke="#fff" stroke-width="1.600"/></svg></header>
            <div class="panetools">
              <button class="tool" aria-label="Структура"><svg><use href="#ttree"/></svg></button><button class="tool" aria-label="Состав"><svg><use href="#tlist"/></svg></button><button class="drop dim" aria-label="Ещё"><svg><use href="#down"/></svg></button><span class="sep"></span><button class="tool active" aria-label="Окно дерева"><svg><use href="#tdoc"/></svg></button><button class="tool" aria-label="Отношения"><svg><use href="#tdocs"/></svg></button>
            </div>
            <div class="panebody">
              <div class="treebox">
                <ul class="tree">
                  <li class="root"><svg><use href="#part"/></svg>Деталь (Тел-0)</li>
                  <li class="exp"><svg><use href="#origin"/></svg>(т)Начало координат</li>
                  <li><svg><use href="#p10"/></svg>Поверхность по пласту</li>
                  <li class="exp"><svg><use href="#poly"/></svg>Ломаная:1</li>
                  <li><svg><use href="#plane"/></svg>Смещенная плоскость:1</li>
                  <li><svg><use href="#plane"/></svg>Смещенная плоскость:2</li>
                  <li><svg><use href="#plane"/></svg>Смещенная плоскость:3</li>
                  <li><svg><use href="#plane"/></svg>Смещенная плоскость:4</li>
                  <li><svg><use href="#plane"/></svg>Смещенная плоскость:5</li>
                  <li><svg><use href="#plane"/></svg>Смещенная плоскость:6</li>
                  <li><svg><use href="#plane"/></svg>Смещенная плоскость:7</li>
                  <li><svg><use href="#plane"/></svg>Смещенная плоскость:8</li>
                  <li><svg><use href="#plane"/></svg>Смещенная плоскость:9</li>
                  <li><svg><use href="#plane"/></svg>Смещенная плоскость:1</li>
                  <li><svg><use href="#plane"/></svg>Смещенная плоскость:1</li>
                  <li><svg><use href="#plane"/></svg></li>
                </ul>
                <div class="vscroll"><button class="sbtn up" aria-label="Вверх"><svg><use href="#down"/></svg></button><span class="thumb"></span><span class="track"></span><button class="sbtn" aria-label="Вниз"><svg><use href="#down"/></svg></button></div>
                <div class="hscroll"><button class="sbtn left" aria-label="Влево"><svg><use href="#down"/></svg></button><span class="thumb"></span><span class="track"></span><button class="sbtn right" aria-label="Вправо"><svg><use href="#down"/></svg></button></div>
              </div>
              <div class="relbox"></div>
            </div>
            <div class="panetabs"><button class="on">Построение</button><button>Исполнения</button><button>Зоны</button></div>
          </section>
          <div class="viewport">
            <svg viewBox="235 122 1127 527" preserveAspectRatio="xMinYMin slice" role="img" aria-label="Поверхность">
              <defs>
                <linearGradient id="sky" x2="0" y2="1"><stop offset="0" stop-color="#66a3e3"/><stop offset=".45" stop-color="#abcdf0"/><stop offset=".62" stop-color="#c5ddf5"/><stop offset="1" stop-color="#fff"/></linearGradient>
                <linearGradient id="skin" gradientUnits="userSpaceOnUse" x1="350" y1="410" x2="720" y2="200"><stop offset="0" stop-color="#8a8a8a"/><stop offset=".18" stop-color="#a0a0a0"/><stop offset=".42" stop-color="#bebebe"/><stop offset=".7" stop-color="#cdcdcd"/><stop offset="1" stop-color="#d8d8d8"/></linearGradient>
                <linearGradient id="low" gradientUnits="userSpaceOnUse" x1="800" y1="370" x2="760" y2="600"><stop offset="0" stop-color="#b0b0b0" stop-opacity="0"/><stop offset="1" stop-color="#b2b2b2"/></linearGradient>
              </defs>
              <path d="M235 122h3000v527H235z" fill="url(#sky)"/>
              <path d="M235 302L263 311L290 319L327 321L372 317L418 303L455 289L520 252L570 218L610 189L650 159L689 129L697 122H953L943 165L933 207L921 250L911 292L899 336L886 379L874 424L860 468L845 513L829 559L813 606L755 571L690 536L649 509L634 501L564 466L492 430L416 394L340 359L265 322L235 310z" fill="url(#skin)"/>
              <path d="M235 302L263 311L290 319L327 321L372 317L418 303L455 289L520 252L570 218L610 189L650 159L689 129L697 122H953L943 165L933 207L921 250L911 292L899 336L886 379L874 424L860 468L845 513L829 559L813 606L755 571L690 536L649 509L634 501L564 466L492 430L416 394L340 359L265 322L235 310z" fill="url(#low)"/>
              <g class="edges">
                <path d="M235 302L263 311L290 319L327 321L372 317L418 303"/>
                <path d="M455 289L520 252L570 218L610 189L650 159L689 129L697 122"/>
                <path d="M953 122L943 165L933 207L921 250L911 292L899 336L886 379L874 424L860 468L845 513L829 559L813 606L755 571L690 536L649 509L634 501L564 466L492 430L416 394L340 359L265 322L235 310"/>
                <path d="M944 122l9 2M807 123L827 129L848 142L872 148L897 157L943 165M736 123L743 132L767 155L787 165L827 183L875 197L890 200L933 207M689 129V151L703 170L717 186L735 199L770 216L827 234L880 243L921 250M650 159L648 202L665 222L683 239L723 261L777 272L803 279L843 284L911 292"/>
                <path d="M610 189L603 205L597 225L594 238L596 262L599 272L610 284L643 301L697 314L753 324L803 329L838 332L883 336H899"/>
                <path d="M492 430L497 421L510 409L530 399L553 388L580 382L602 379L630 377L670 374H697L717 376L747 375L777 376L810 378L886 379"/>
                <path d="M564 466C570 460 580 455 589 452L642 438L681 432L754 427L821 423H873M634 501L661 492L695 485L744 477L821 469L860 468M690 536L758 523L845 513M755 571L783 565L829 559"/>
                <path d="M570 218L547 245L533 262L510 281L495 294L477 304L460 310L443 313H427L403 316L373 321H343M523 250L507 263L487 276L460 289L430 302L413 308L387 313L373 317M428 311L403 312L382 315"/>
                <path d="M415 394L417 383L412 367L403 355L392 341L375 335L347 330L317 325L293 319L265 314M340 359L332 347L302 328L273 319L257 312L235 304M235 306L250 314L265 322"/>
              </g>
              <g fill="none" shape-rendering="crispEdges">
                <path d="M608 133L611 168" stroke="#0090ff"/><path d="M577 167L611 169" stroke="#ff8080"/><path d="M611 169L597 179" stroke="#80ff00"/>
                <path d="M716 217L740 235L766 264L793 300L811 321L837 340L848 365L861 395L874 425L888 459L902 493L921 547L956 649" stroke="#0a0ae0"/>
                <path d="M900 148L894 175M892 190L885 221M883 236L879 264M876 282L872 307M872 322L868 352" stroke="#ed1c24"/>
                <path d="M720 212L693 234L655 259L610 283L567 303L562 306M578 311L540 326L509 336" stroke="#a349a4" stroke-width="3"/>
                <path d="M560 308h12M562 311h16M562 306l10-1" stroke="#ed1c24" stroke-width="3"/><path d="M564 311l10-4" stroke="#3f48cc" stroke-width="3"/>
                <path d="M717 214l2 5 3-4 1 6 4-3 1 7 4-4 1 8 4-4 1 8 4-3 2 8 2-5 2 8" stroke="#ed1c24"/><path d="M719 217l3 1M724 220l2-3M729 226l2-5M735 230l1-4M740 234l1-3M744 240v-5" stroke="#3f48cc"/>
                <g stroke="#ed1c24" stroke-width="3"><path d="M748 239l1 9 3 0-2-7M754 243l1 8 3-1M757 246l3 11M763 253l0 6 5 8 1-1M770 262l3 9 6 11M780 271l2 11 9 13M791 286l2 11 7 11 11 12M808 307l8 12 9 11M823 312l1 10 4 8 9 9M838 325v13l4 9 5 13M851 338l-2 14 3 13 8 28M866 367l-2 15 1 16 5 15 4 12"/></g>
                <g stroke="#3f48cc" stroke-width="3"><path d="M748 238l-2 6M753 241l-1 8M757 245l-1 6M763 252l-2 6M770 259l-1 8M779 269l-1 11M790 283v10M807 302l1 10M823 311l-2 14M838 323l-2 14M850 338l-2 9v12M866 366l-4 16-1 10"/></g>
              </g>
              <g font-family="Liberation Serif, serif" font-size="14">
                <path d="M302 537h4l2 34h-4z" fill="#80b0f4" stroke="#6890d8"/><path d="M303 523l5 18q-5 3-9 0z" fill="#8abaf6" stroke="#5880d0"/>
                <path d="M268 571l36 2v3l-36-1z" fill="#f07878" stroke="#c86060"/><path d="M257 573l13-5v10z" fill="#e06868" stroke="#b85050"/>
                <path d="M301 573l5 4-13 11-4-4z" fill="#58a868" stroke="#388048"/><path d="M283 592l5-10 8 6-5 4z" fill="#30a040" stroke="#388048"/>
                <circle cx="307" cy="575" r="7" fill="#f8f060" stroke="#c8c058"/><circle cx="305" cy="573" r="2.500" fill="#ffffc0"/>
                <text x="297" y="519" fill="#4888f0">Z</text><text x="243" y="577" fill="#f04848">X</text><text x="276" y="599" fill="#30b048">Y</text>
              </g>
            </svg>
          </div>
        </div>
      </div>

      <section class="props">
        <span class="vgrip"></span>
        <div class="propbtns"><button aria-label="Прервать"><svg><use href="#stop"/></svg></button><button aria-label="Указать"><svg><use href="#target"/></svg></button><button aria-label="Справка"><svg><use href="#note"/></svg></button></div>
        <div class="propbody"><div class="propbox"></div><button class="proptab"><svg><use href="#rotate"/></svg>Повернуть</button></div>
      </section>
    </div>
  </div>

  <footer class="status"><span>Нажмите левую кнопку мыши и, не отпуская, поверните изображение</span><span class="cell"></span></footer>

  <div class="taskbar">
    <button class="start"><svg><use href="#flag"/></svg>Пуск</button>
    <span class="tsep"></span>
    <div class="quick"><button aria-label="Рабочий стол"><svg><use href="#cubes"/></svg></button><button aria-label="Проводник"><svg><use href="#folder"/></svg></button><button aria-label="Firefox"><svg><use href="#fox"/></svg></button><button aria-label="Winamp"><svg><use href="#bolt"/></svg></button><button aria-label="Far"><svg><use href="#commander"/></svg></button></div>
    <div class="tasks">
      <button class="task"><svg><use href="#paint"/></svg><span>Безымянный - Paint</span></button>
      <button class="task"><svg><use href="#monitor"/></svg><span>Диспетчер задач Wind...</span></button>
      <button class="task current"><svg><use href="#logo"/></svg><span>КОМПАС-3D V15.2 &nbsp;- l...</span></button>
    </div>
    <span class="tsep"></span>
    <span class="lang">EN</span>
    <div class="tray"><svg><use href="#t1"/></svg><svg><use href="#t2"/></svg><svg><use href="#t3"/></svg><svg><use href="#t4"/></svg><svg><use href="#t5"/></svg><svg><use href="#t6"/></svg><svg><use href="#t7"/></svg><svg><use href="#t8"/></svg><svg><use href="#t9"/></svg><svg><use href="#t10"/></svg><svg><use href="#t11"/></svg><time>9:21</time><svg><use href="#t12"/></svg></div>
  </div>
</div>
</body>
</html>
```
FILE: styles.css
```css
* { box-sizing: border-box; }
body { margin: 0; background: #fff; }
body, button, select {
  font-family: "Liberation Sans", Arial, sans-serif;
  font-size: 11px;
  line-height: 14px;
  color: #000;
}
button { margin: 0; padding: 0; border: 0; background: none; flex: none; white-space: nowrap; }
h1, h2 { margin: 0; font-size: 11px; font-weight: normal; }
svg { display: block; flex: none; }
.sprite { position: absolute; width: 0; height: 0; }
.ico { width: 16px; height: 16px; }
.screen { max-width: 1366px; background: #e1e5e8; overflow: hidden; }

/* Title and menu */
.titlebar { display: flex; align-items: center; height: 19px; padding: 0 6px 0 2px; background: #cdd4dc; }
.title { flex: 1; text-align: center; font-size: 12px; color: #40404c; }
.winbtns { display: flex; gap: 11px; padding-left: 8px; }
.winbtn svg { width: 12px; height: 12px; }
.menubar { display: flex; align-items: center; height: 24px; padding-left: 4px; }
.menubar button { padding: 0 8px; color: #404040; }
.menubar .grip { margin-right: 3px; }
.grip { flex: none; width: 2px; height: 14px; background: repeating-linear-gradient(#b8bcc2 0 2px, transparent 2px 4px); }

/* Toolbars */
.toolrow { display: flex; height: 26px; padding-left: 2px; gap: 1px; }
.toolbar { display: flex; align-items: center; background: linear-gradient(#fff 40%, #eceef4); border-radius: 5px; border-bottom: 1px solid #8c9098; overflow: hidden; }
.toolbar .grip { margin: 0 5px 0 3px; }
.tool { display: flex; align-items: center; justify-content: center; width: 22px; height: 22px; border-radius: 3px; }
.tool svg { width: 16px; height: 16px; overflow: visible; }
.tool.active { background: linear-gradient(#ffe9a8, #fbcb5a); border: 1px solid #b89858; }
.split { margin-left: 2px; }
.drop { display: flex; align-items: center; justify-content: center; width: 10px; height: 22px; }
.drop svg { width: 5px; height: 3px; }
.drop-wide { width: 12px; }
.drop.dim { opacity: .5; }
.sep { flex: none; width: 8px; height: 14px; background: linear-gradient(#9a9ea6, #9a9ea6) 3px 0 / 1px 14px no-repeat; }
.drop + .sep { margin-left: 1px; }
.cap { display: flex; align-self: stretch; align-items: flex-end; justify-content: center; width: 10px; margin-left: 4px; padding-bottom: 4px; background: linear-gradient(#c8ccd2, #868a92); }
.cap svg { width: 6px; height: 6px; border-top: 1px solid #000; padding-top: 2px; }
.combo { position: relative; display: flex; height: 20px; }
.combo select { flex: 1; appearance: none; border: 1px solid #848484; border-radius: 0; background: #fff; padding: 0 16px 0 4px; margin: 0; min-width: 0; }
.combo i { position: absolute; top: 1px; right: 1px; bottom: 1px; width: 14px; display: flex; align-items: center; justify-content: center; background: #d4d0c8; border-left: 1px solid #848484; pointer-events: none; }
.combo i svg { width: 5px; height: 3px; }
.combo-zoom { width: 66px; }
.combo-step { width: 60px; }
.combo-layer { width: 126px; margin-left: 1px; }

/* Left palette */
.workspace { display: flex; }
.palette { flex: none; display: flex; flex-direction: column; width: 26px; background: linear-gradient(90deg, #fff 30%, #dfe3ea); border-left: 1px solid #e1e5e8; }
.palette button { display: flex; align-items: center; justify-content: center; }
.grip-h { width: 15px; height: 2px; margin: 5px 0 2px 4px; background: repeating-linear-gradient(90deg, #b8bcc2 0 2px, transparent 2px 4px); }
.pal-modes { display: flex; flex-direction: column; padding-left: 6px; background: repeating-linear-gradient(#c8ccd2 0 1px, transparent 1px 3px) 1px 0 / 1px 100% no-repeat; }
.pal-modes button { width: 17px; height: 17px; }
.pal-modes svg { width: 13px; height: 13px; }
.pal-modes .on { background: #fbd070; outline: 1px solid #28307c; }
.pal-tools { display: flex; flex-direction: column; align-items: center; padding: 1px 2px 0 0; }
.pal-tools button { width: 22px; height: 22px; }
.pal-tools svg { width: 16px; height: 16px; }
.pal-tools hr { width: 14px; height: 1px; margin: 3px 0 4px; border: 0; background: #8c9098; }
.pal-cap { margin-top: auto; height: 12px; padding: 2px 0 0 4px; background: linear-gradient(90deg, #8a8e98, #c8ccd2); border-radius: 0 0 4px 4px; }
.pal-cap svg { width: 18px; height: 9px; }

/* Document frame */
.main { flex: 1; min-width: 0; }
.docframe { border: 1px solid #808080; background: linear-gradient(90deg, #c6d6a0, #f2f8d0); }
.tabs { display: flex; align-items: flex-end; height: 23px; padding: 0 6px 0 2px; background: linear-gradient(#e3e7f0, #fff); border-bottom: 1px solid #808080; }
.tab { position: relative; display: flex; align-items: center; height: 21px; }
.tab span, .tab .ico, .tab .close { position: relative; }
.tabshape { position: absolute; inset: 0; width: 100%; height: 100%; }
.tab-start { width: 180px; padding-left: 24px; gap: 16px; }
.tab-global { width: 106px; padding-left: 8px; gap: 13px; }
.tab-local { width: 135px; margin-left: -19px; padding: 0 12px 0 25px; gap: 10px; font-weight: bold; }
.tab-local .close { width: 7px; height: 7px; margin-left: auto; }
.tablist { margin-left: auto; height: 100%; }
.tablist svg { width: 9px; height: 5px; }
.docbody { display: flex; gap: 4px; margin: 1px 2px 3px; background: #e1e5e8; border-top: 1px solid #a0a0a0; }

/* Model tree */
.treepane { flex: none; display: flex; flex-direction: column; width: 200px; }
.panehead { display: flex; align-items: center; height: 18px; margin-left: 1px; padding: 0 6px 0 3px; gap: 8px; background: #808080; }
.panehead h2 { flex: 1; color: #d4d0c8; }
.panehead svg { width: 8px; height: 9px; }
.panetools { display: flex; align-items: center; height: 25px; padding-left: 2px; background: linear-gradient(#fff, #e4e7ec); }
.panetools .tool svg { width: 15px; }
.panebody { flex: 1; display: flex; flex-direction: column; gap: 2px; padding: 3px 4px 2px 3px; background: #d4d0c8; border: 1px solid #808080; border-bottom-color: #000; }
.treebox { display: grid; grid-template: 306px 16px / minmax(0, 1fr) 16px; border: 1px solid #808080; border-top: 2px solid #606060; border-left-width: 2px; background: #d4d0c8; }
.tree { margin: 0; padding: 0; overflow: hidden; list-style: none; background: #fff; }
.tree li { position: relative; display: flex; align-items: center; height: 20px; gap: 6px; padding-left: 28px; white-space: nowrap; background: repeating-linear-gradient(#909090 0 1px, transparent 1px 2px) 13px 0 / 1px 100% no-repeat, repeating-linear-gradient(90deg, #909090 0 1px, transparent 1px 2px) 14px 10px / 12px 1px no-repeat; }
.tree li.root { padding-left: 5px; background: none; }
.tree svg { width: 16px; height: 16px; }
.exp::before { content: "+"; position: absolute; left: 8px; top: 5px; width: 11px; height: 11px; border: 1px solid #808080; background: #fff; font-size: 12px; line-height: 9px; text-align: center; }
.vscroll { display: flex; flex-direction: column; }
.hscroll { display: flex; }
.sbtn, .thumb { background: #d4d0c8; border: 1px solid; border-color: #fff #404040 #404040 #fff; }
.sbtn { display: flex; align-items: center; justify-content: center; width: 16px; height: 16px; }
.sbtn svg { width: 7px; height: 4px; }
.up svg { transform: rotate(180deg); }
.left svg { transform: rotate(90deg); }
.right svg { transform: rotate(-90deg); }
.track { flex: 1; background: #eae8e4; }
.vscroll .thumb { height: 157px; }
.hscroll .thumb { width: 111px; }
.relbox { flex: 1; border: 1px solid #808080; }
.panetabs { display: flex; height: 19px; padding-left: 3px; gap: 0; align-items: flex-start; }
.panetabs button { height: 17px; padding: 0 5px; color: #404040; }
.panetabs .on { background: #fff; border: 1px solid #b0b4b8; border-top: 0; border-radius: 0 0 4px 4px; }
.viewport { flex: 1; min-width: 0; border: 1px solid #d4d0c8; border-top-color: #404040; border-left: 2px solid #505050; background: #fff; }
.viewport svg { width: 100%; height: 527px; }
.edges { fill: none; stroke: #000; stroke-width: 1; shape-rendering: crispEdges; }

/* Property bar */
.props { display: flex; align-items: flex-start; padding: 7px 6px 0 1px; }
.vgrip { width: 3px; height: 54px; margin: 2px 2px 0 0; background: repeating-linear-gradient(#909498 0 1px, transparent 1px 3px); }
.propbtns { display: grid; grid-template-columns: 16px 16px; gap: 6px; align-content: start; width: 47px; height: 60px; padding: 3px 4px; background: linear-gradient(90deg, #fff 40%, #e1e5e8); }
.propbtns svg { width: 16px; height: 16px; }
.propbody { flex: 1; min-width: 0; }
.propbox { height: 35px; border: 1px solid #808080; border-bottom-color: #000; background: #d9d6ce; box-shadow: inset 0 0 0 3px #d4d0c8; }
.proptab { display: flex; align-items: center; height: 20px; margin-left: 3px; padding: 2px 5px 0 2px; gap: 1px; background: #fff; border: 1px solid #b0b4b8; border-top: 0; border-radius: 0 0 4px 4px; color: #404040; }
.proptab svg { width: 16px; height: 14px; }

/* Status bar */
.status { display: flex; justify-content: space-between; align-items: center; height: 20px; padding-left: 5px; border-top: 1px solid #8c9098; background: linear-gradient(#e2e5e9, #c0c5ca); color: #404040; }
.cell { width: 87px; height: 16px; border: solid #8c9098; border-width: 0 1px; }

/* Taskbar */
.taskbar { display: flex; align-items: center; height: 26px; padding: 0 2px; border-top: 1px solid #fff; background: #d4d0c8; }
.taskbar svg { width: 16px; height: 16px; }
.start { display: flex; align-items: center; width: 51px; height: 22px; padding-left: 1px; gap: 1px; font-weight: bold; border: 1px solid; border-color: #fff #404040 #404040 #fff; box-shadow: inset -1px -1px #808080; }
.tsep { flex: none; width: 2px; height: 18px; margin: 0 7px; border: solid; border-width: 0 1px; border-color: #fff #808080; }
.quick { display: flex; gap: 18px; padding: 0 10px; }
.tasks { display: flex; flex: 1; gap: 2px; min-width: 0; }
.task { flex: 0 1 160px; display: flex; align-items: center; height: 22px; padding: 0 3px; gap: 4px; min-width: 0; border: 1px solid; border-color: #fff #404040 #404040 #fff; box-shadow: inset -1px -1px #808080; }
.task span { overflow: hidden; }
.task.current { background: #fff; font-weight: bold; border-color: #404040 #fff #fff #404040; box-shadow: inset 1px 1px #808080; }
.lang { width: 23px; }
.tray { display: flex; align-items: center; height: 23px; gap: 8px; padding: 0 2px 0 7px; border: 1px solid; border-color: #808080 #fff #fff #808080; }
.tray time { padding: 0 2px 0 8px; }
```
